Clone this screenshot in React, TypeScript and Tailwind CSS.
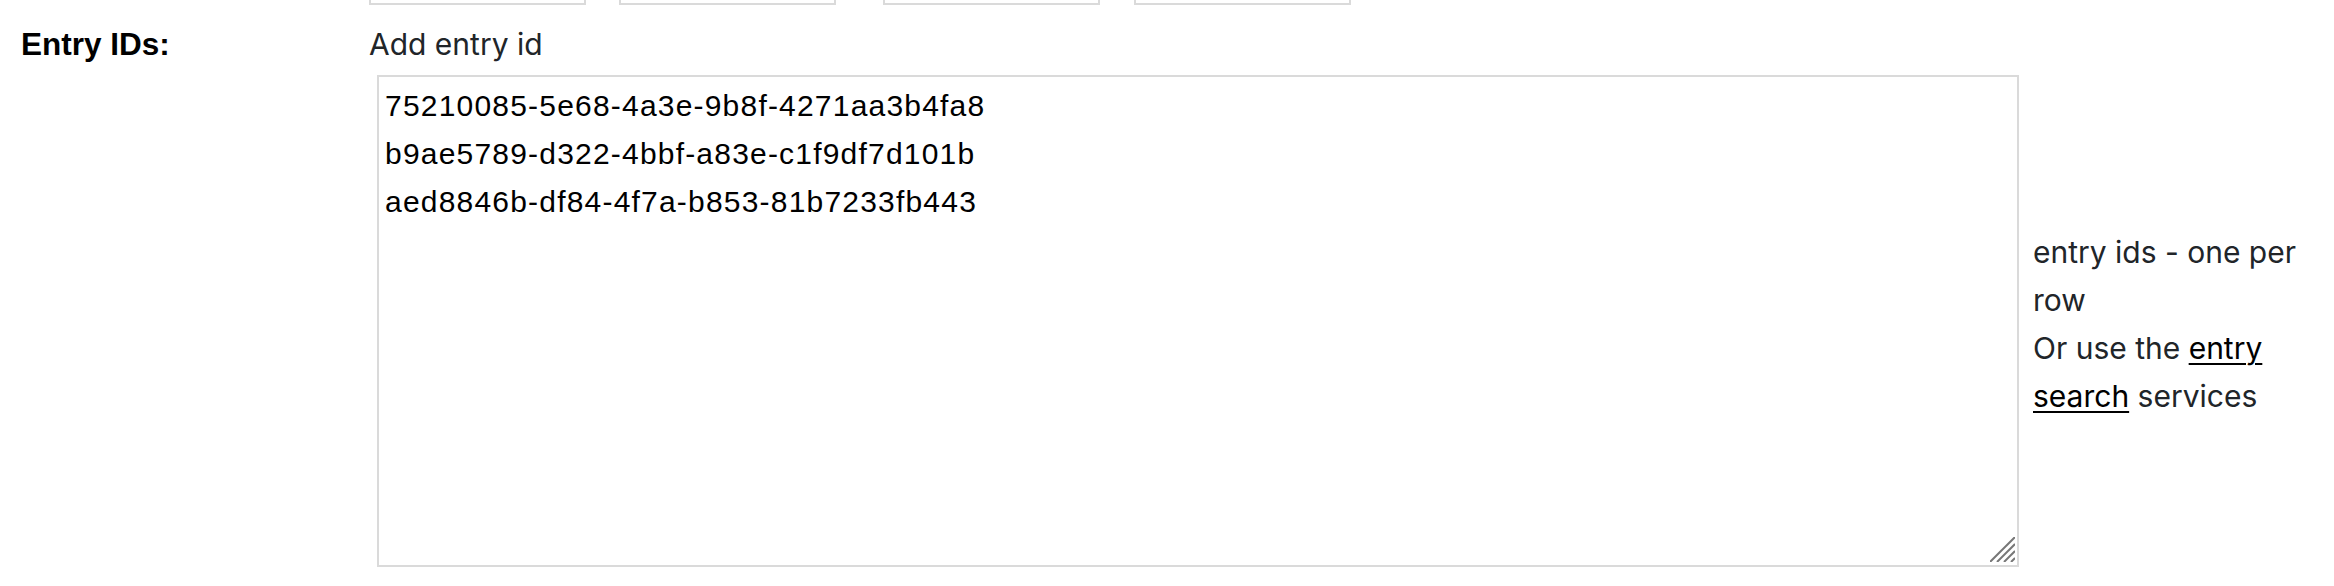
export default function App() {
  const ids = [
    "75210085-5e68-4a3e-9b8f-4271aa3b4fa8",
    "b9ae5789-d322-4bbf-a83e-c1f9df7d101b",
    "aed8846b-df84-4f7a-b853-81b7233fb443",
  ].join("\n");
  return (
    <div className="w-[2334px] h-[586px] bg-white overflow-hidden">
      <div className="flex h-[5px]">
        <div className="ml-[369px] w-[217px] border-x-2 border-b-2 border-[#dadada]" />
        <div className="ml-[33px] w-[217px] border-x-2 border-b-2 border-[#dadada]" />
        <div className="ml-[47px] w-[217px] border-x-2 border-b-2 border-[#dadada]" />
        <div className="ml-[34px] w-[217px] border-x-2 border-b-2 border-[#dadada]" />
      </div>
      <div className="flex mt-[15px]">
        <div className="w-[369px] shrink-0 pl-[21px] font-bold text-[31.5px] leading-[48px] text-black font-['Liberation_Sans',Arial,sans-serif]">
          Entry IDs:
        </div>
        <div className="flex flex-col">
          <div className="text-[30px] leading-[48px] text-[#212529] font-['Inter',sans-serif]">
            Add entry id
          </div>
          <div className="flex items-center mt-[7px]">
            <div className="relative ml-[8px] shrink-0">
              <textarea
                readOnly
                value={ids}
                className="block w-[1642px] h-[492px] border-2 border-[#dadada] bg-white pl-[6px] pt-[5px] resize-none outline-none text-black text-[30px] leading-[48px] tracking-[1.2px] font-['Liberation_Sans',Arial,sans-serif]"
              />
              <svg
                className="absolute right-[4px] bottom-[5px]"
                width="25"
                height="25"
                viewBox="0 0 25 25"
              >
                <g stroke="#777" strokeWidth="2" fill="none">
                  <line x1="0" y1="25" x2="25" y2="0" />
                  <line x1="7" y1="25" x2="25" y2="7" />
                  <line x1="14" y1="25" x2="25" y2="14" />
                  <line x1="21" y1="25" x2="25" y2="21" />
                </g>
              </svg>
            </div>
            <div className="ml-[14px] mt-[6px] w-[301px] text-[30px] leading-[48px] text-[#212529] font-['Inter',sans-serif]">
              entry ids - one per row
              <br />
              Or use the{" "}
              <a href="#" className="underline decoration-2 underline-offset-4 text-black">
                entry search
              </a>{" "}
              services
            </div>
          </div>
        </div>
      </div>
    </div>
  );
}
